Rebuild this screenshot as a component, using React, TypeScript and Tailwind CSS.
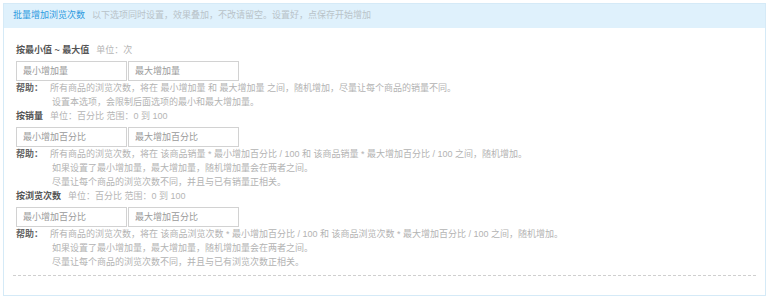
import React from "react";

const font = { fontFamily: '"Liberation Sans", "Noto Sans CJK SC", sans-serif' };

function Section({
  title,
  unit,
  ph1,
  ph2,
  lines,
}: {
  title: string;
  unit: string;
  ph1: string;
  ph2: string;
  lines: string[];
}) {
  return (
    <div>
      <div className="h-[14px] leading-[14px] flex items-center">
        <span className="font-bold text-[#555]">{title}</span>
        <span className="ml-[7px] text-[#b5b5b5]">{unit}</span>
      </div>
      <div className="mt-[4px] flex gap-[1px]">
        <input
          className="w-[111px] h-[20px] border border-[#d2d2d2] pl-[6px] text-[9px] outline-none placeholder:text-[#9a9a9a]"
          placeholder={ph1}
          style={font}
        />
        <input
          className="w-[111px] h-[20px] border border-[#d2d2d2] pl-[6px] text-[9px] outline-none placeholder:text-[#9a9a9a]"
          placeholder={ph2}
          style={font}
        />
      </div>
      <div className="flex leading-[14px]">
        <div className="w-[34px] shrink-0 font-bold text-[#666]">帮助：</div>
        <div className="text-[#b3b3b3]">
          {lines.map((l, i) => (
            <div key={i} className={i === 0 ? "" : "pl-[2px]"}>
              {l}
            </div>
          ))}
        </div>
      </div>
    </div>
  );
}

export default function App() {
  return (
    <div className="p-[3px] bg-white" style={font}>
      <div className="w-[763px] h-[293px] border border-[#d5eaf7] flex flex-col text-[9px]">
        <div className="h-[24px] bg-[#dff1fc] flex items-center px-[9px]">
          <span className="text-[#2d9ae0]">批量增加浏览次数</span>
          <span className="ml-[7px] text-[#b9c3c9]">以下选项同时设置，效果叠加，不改请留空。设置好，点保存开始增加</span>
        </div>
        <div className="px-[9px] pt-[15px]">
          <div className="pl-[3px]">
            <Section
              title="按最小值 ~ 最大值"
              unit="单位：次"
              ph1="最小增加量"
              ph2="最大增加量"
              lines={[
                "所有商品的浏览次数，将在 最小增加量 和 最大增加量 之间，随机增加，尽量让每个商品的销量不同。",
                "设置本选项，会限制后面选项的最小和最大增加量。",
              ]}
            />
            <Section
              title="按销量"
              unit="单位：百分比 范围：0 到 100"
              ph1="最小增加百分比"
              ph2="最大增加百分比"
              lines={[
                "所有商品的浏览次数，将在 该商品销量 * 最小增加百分比 / 100 和 该商品销量 * 最大增加百分比 / 100 之间，随机增加。",
                "如果设置了最小增加量，最大增加量，随机增加量会在两者之间。",
                "尽量让每个商品的浏览次数不同，并且与已有销量正相关。",
              ]}
            />
            <Section
              title="按浏览次数"
              unit="单位：百分比 范围：0 到 100"
              ph1="最小增加百分比"
              ph2="最大增加百分比"
              lines={[
                "所有商品的浏览次数，将在 该商品浏览次数 * 最小增加百分比 / 100 和 该商品浏览次数 * 最大增加百分比 / 100 之间，随机增加。",
                "如果设置了最小增加量，最大增加量，随机增加量会在两者之间。",
                "尽量让每个商品的浏览次数不同，并且与已有浏览次数正相关。",
              ]}
            />
          </div>
          <div className="mt-[6px] border-t border-dashed border-[#cfcfcf]" />
        </div>
      </div>
    </div>
  );
}
